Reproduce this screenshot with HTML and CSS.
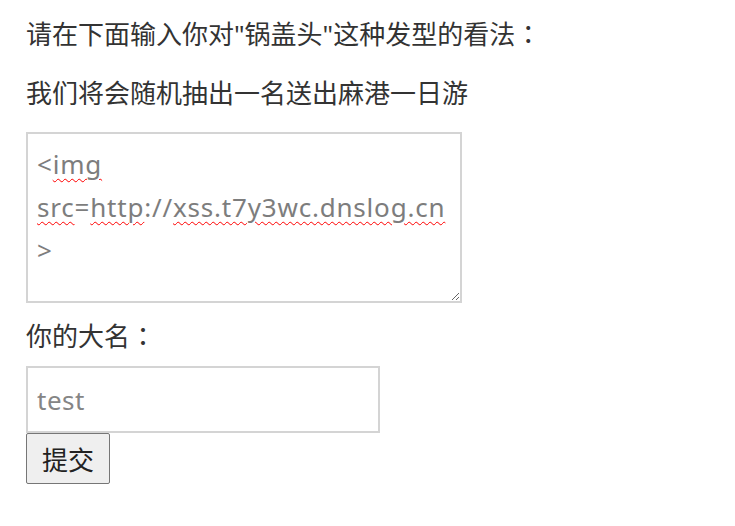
FILE: index.html
```html
<!DOCTYPE html>
<html lang="zh-CN">
<head>
<meta charset="utf-8">
<title>留言</title>
<link rel="stylesheet" href="styles.css">
</head>
<body>
<div class="page">
  <p class="line first">请在下面输入你对"锅盖头"这种发型的看法<span class="punct" lang="zh-Hant">：</span></p>
  <p class="line second">我们将会随机抽出一名送出麻港一日游</p>
  <form class="form">
    <div class="textarea" role="textbox" aria-multiline="true">&lt;<span class="typo">img</span> <span class="typo">src</span>=<span class="typo">http</span>://<span class="typo">xss.t7y3wc.dnslog.cn</span>&gt;</div>
    <label class="label" for="name">你的大名<span class="punct" lang="zh-Hant">：</span></label>
    <input class="name" id="name" type="text" value="test">
    <button class="submit" type="button">提交</button>
  </form>
</div>
</body>
</html>
```

FILE: styles.css
```css
html, body {
  margin: 0;
  padding: 0;
  background: #ffffff;
}

.page {
  padding: 16px 26px 0 26px;
  font-family: "Noto Sans", "Noto Sans CJK SC", sans-serif;
  font-size: 26px;
  color: #333333;
}

.line {
  margin: 0;
  line-height: 36px;
  white-space: nowrap;
}

.punct {
  display: inline-block;
  width: 26px;
  line-height: 1;
  text-align: center;
  font-family: "Noto Sans CJK TC", sans-serif;
}

.second {
  margin-top: 23px;
}

.form {
  display: flex;
  flex-direction: column;
  align-items: flex-start;
  margin-top: 21px;
}

.textarea {
  box-sizing: border-box;
  width: 436px;
  height: 171px;
  border: 2px solid #d4d4d4;
  padding: 9px 9px;
  font-family: "Noto Sans", "Noto Sans CJK SC", sans-serif;
  font-size: 26px;
  letter-spacing: 0.8px;
  line-height: 43px;
  color: #7d7d7d;
  overflow: auto;
  resize: both;
  overflow-wrap: break-word;
  word-break: normal;
  background: #fff;
}

.typo {
  text-decoration: underline wavy #ff0000;
  text-decoration-thickness: 1px;
  text-underline-offset: 4px;
}

.label {
  display: block;
  line-height: 36px;
  margin-top: 15px;
}

.name {
  box-sizing: border-box;
  width: 354px;
  height: 67px;
  margin: 12px 0 0 0;
  border: 2px solid #d4d4d4;
  padding: 0 9px;
  font-family: "Noto Sans", "Noto Sans CJK SC", sans-serif;
  font-size: 26px;
  letter-spacing: 0.5px;
  color: #858585;
  background: #fff;
  outline: none;
}

.submit {
  box-sizing: border-box;
  width: 84px;
  height: 51px;
  margin: 0;
  padding: 0 14px;
  border: 1px solid #767676;
  border-radius: 2px;
  background: #efefef;
  font-family: "Noto Sans CJK SC", sans-serif;
  font-size: 26px;
  color: #222;
}
```
